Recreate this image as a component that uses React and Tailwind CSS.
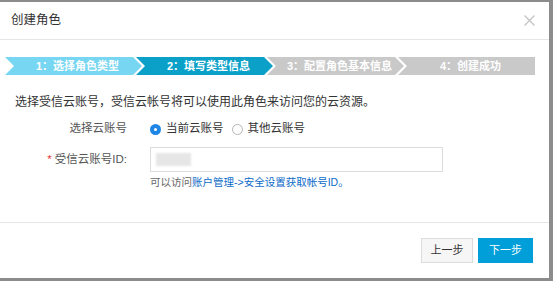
import React from 'react';

const steps = [
  { label: '1：选择角色类型', color: 'bg-[#77d6f1]' },
  { label: '2：填写类型信息', color: 'bg-[#0aa0c8]' },
  { label: '3：配置角色基本信息', color: 'bg-[#c9c9c9]' },
  { label: '4：创建成功', color: 'bg-[#c9c9c9]' },
];

function StepBar() {
  return (
    <div className="flex h-[18px] ml-[5px] w-[530px]">
      {steps.map((s, i) => (
        <div
          key={s.label}
          className={`flex-1 flex items-center justify-center text-white text-[11px] font-bold ${s.color} ${
            i === 0 ? '' : '-ml-[6px]'
          } ${
            i === steps.length - 1
              ? '[clip-path:polygon(0_0,100%_0,100%_100%,0_100%,9px_50%)]'
              : '[clip-path:polygon(0_0,calc(100%-9px)_0,100%_50%,calc(100%-9px)_100%,0_100%,9px_50%)]'
          }`}
        >
          <span className="pl-[8px]">{s.label}</span>
        </div>
      ))}
    </div>
  );
}

function Radio({ checked, label }) {
  return (
    <label className="flex items-center gap-[5px]">
      {checked ? (
        <span className="w-[11px] h-[11px] rounded-full bg-[#1f86e6] flex items-center justify-center">
          <span className="w-[3px] h-[3px] rounded-full bg-white" />
        </span>
      ) : (
        <span className="w-[11px] h-[11px] rounded-full border border-[#b5b5b5] bg-white" />
      )}
      <span className="text-[11.5px] text-[#333]">{label}</span>
    </label>
  );
}

export default function App() {
  return (
    <div
      className="w-[553px] h-[281px] bg-[#8c8c8c] overflow-hidden"
      style={{ fontFamily: '"Liberation Sans", "Noto Sans CJK SC", sans-serif' }}
    >
      <div className="mt-[2px] w-[549px] h-[276px] bg-white flex flex-col">
        {/* header */}
        <div className="h-[38px] flex items-center justify-between pl-[11px] pr-[14px] border-b border-[#e6e6e6]">
          <span className="text-[12.5px] text-[#333]">创建角色</span>
          <svg width="11" height="11" viewBox="0 0 11 11">
            <path d="M0.5 0.5L10.5 10.5M10.5 0.5L0.5 10.5" stroke="#c4c4c4" strokeWidth="1.3" />
          </svg>
        </div>

        {/* body */}
        <div className="flex-1 pt-[17px]">
          <StepBar />

          <p className="mt-[18px] ml-[15px] text-[12px] text-[#333]">
            选择受信云账号，受信云帐号将可以使用此角色来访问您的云资源。
          </p>

          <div className="mt-[9px] flex items-center h-[18px]">
            <span className="w-[127px] text-right text-[11.5px] text-[#555]">选择云账号</span>
            <div className="ml-[23px] flex items-center gap-[8px]">
              <Radio checked label="当前云账号" />
              <Radio label="其他云账号" />
            </div>
          </div>

          <div className="mt-[9px] flex items-center">
            <span className="w-[127px] text-right text-[11.5px] text-[#555]">
              <span className="text-[#e4393c] mr-[3px]">*</span>受信云账号ID:
            </span>
            <div className="ml-[23px] w-[293px] h-[25px] border border-[#dcdcdc] flex items-center pl-[5px]">
              <span className="w-[35px] h-[13px] bg-[#e6e6e6] blur-[1px]" />
            </div>
          </div>

          <p className="mt-[3px] ml-[150px] text-[10.5px] text-[#666]">
            可以访问<span className="text-[#0b6bc9]">账户管理-&gt;安全设置获取帐号ID。</span>
          </p>
        </div>

        {/* footer */}
        <div className="h-[56px] border-t border-[#e6e6e6] flex items-center justify-end gap-[5px] pr-[16px]">
          <button className="w-[52px] h-[25px] bg-[#f6f6f6] border border-[#dcdcdc] text-[11px] text-[#333]">
            上一步
          </button>
          <button className="w-[55px] h-[25px] bg-[#009fd9] text-[11px] text-white">下一步</button>
        </div>
      </div>
    </div>
  );
}
